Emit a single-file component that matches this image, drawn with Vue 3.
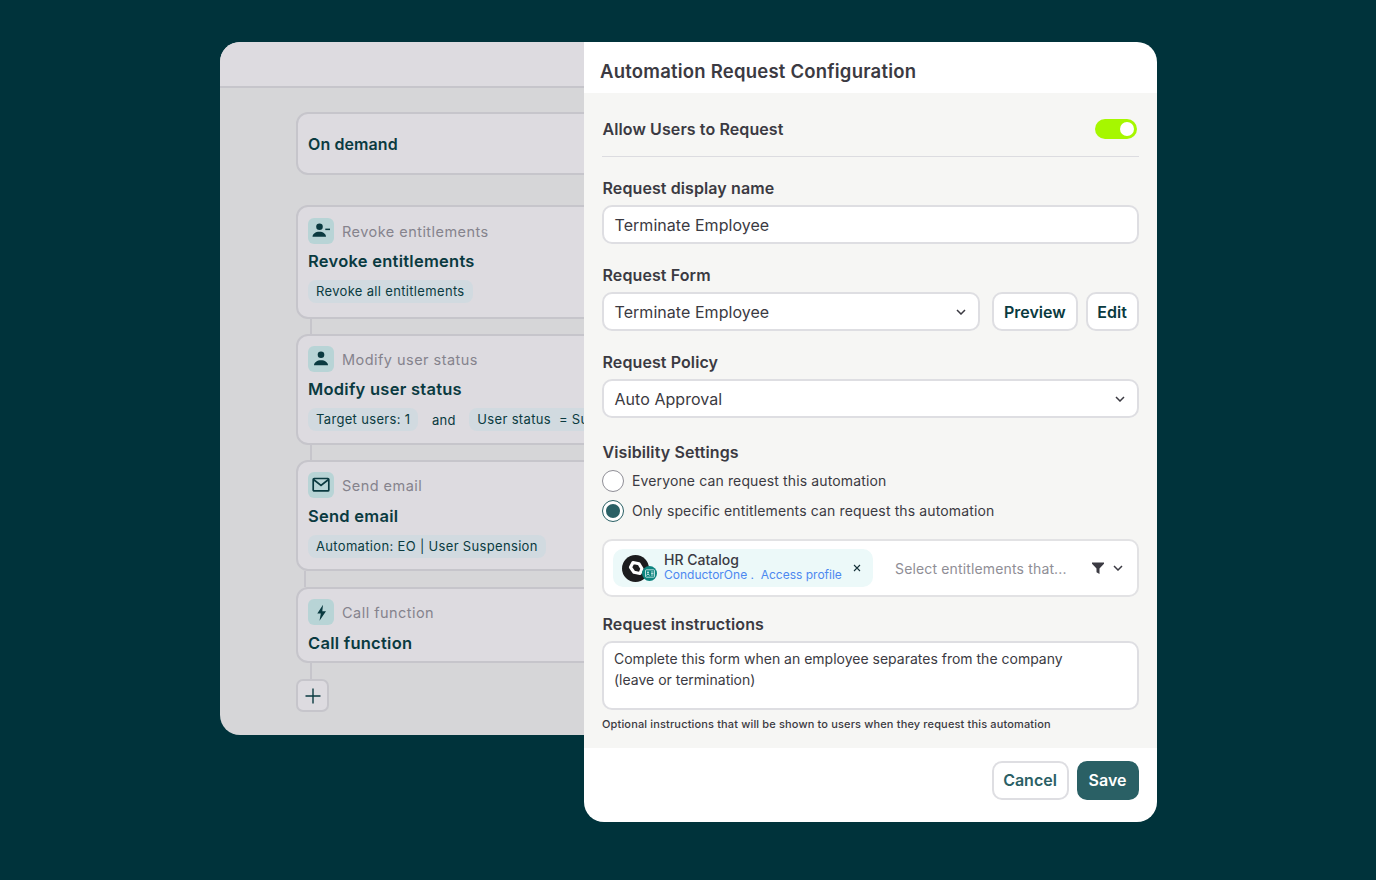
<template>
  <div class="stage">
    <section class="flow">
      <div class="flow-top"></div>
      <div class="flow-body">
        <div class="card trigger">On demand</div>

        <div
          v-for="step in steps"
          :key="step.label"
          class="step"
          :class="step.cls"
        >
          <div class="card">
            <div class="card-head">
              <span class="step-icon">
                <svg v-if="step.icon === 'revoke'" width="20" height="20" viewBox="0 0 20 20" fill="#0a3a40">
                  <circle cx="8.500" cy="5.800" r="3.300" />
                  <path d="M1.500 15.800c0-3 3-5.100 6.800-5.100 3.800 0 6.700 2.100 6.700 5.100z" />
                  <rect x="14.300" y="7.600" width="4.700" height="1.500" />
                </svg>
                <svg v-else-if="step.icon === 'user'" width="20" height="20" viewBox="0 0 20 20" fill="#0a3a40">
                  <circle cx="10" cy="5.800" r="3.300" />
                  <path d="M3 16.300c0-3 3.200-5.100 7-5.100s7 2.100 7 5.100z" />
                </svg>
                <svg v-else-if="step.icon === 'mail'" width="20" height="20" viewBox="0 0 20 20" fill="none" stroke="#0a3a40" stroke-width="1.700">
                  <rect x="2.200" y="3.500" width="15.600" height="12.400" rx="1" />
                  <path d="M2.500 4.500l7.500 6 7.500-6" />
                </svg>
                <svg v-else width="20" height="20" viewBox="0 0 20 20" fill="#0a3a40">
                  <path d="M12 2.800L6.300 11.500h3.500L8.500 18.700 15 9.200h-3.700z" />
                </svg>
              </span>
              <span class="step-label">{{ step.label }}</span>
            </div>
            <div class="step-title">{{ step.label }}</div>
            <div v-if="step.chips" class="chips">
              <template v-for="chip in step.chips" :key="chip.text">
                <span :class="chip.plain ? 'chip-plain' : 'chip'">{{ chip.text }}</span>
              </template>
            </div>
          </div>
        </div>

        <div class="add-wrap">
          <button class="add-btn">
            <svg width="18" height="18" viewBox="0 0 18 18" fill="none" stroke="#0a3a40" stroke-width="1.400">
              <path d="M9 1.500v15M1.500 9h15" />
            </svg>
          </button>
        </div>
      </div>
    </section>

    <section class="dialog">
      <header class="dialog-head">Automation Request Configuration</header>

      <div class="dialog-body">
        <div class="allow-row">
          <span class="field-label">Allow Users to Request</span>
          <span class="toggle"><span class="knob"></span></span>
        </div>

        <div class="field-label name-label">Request display name</div>
        <div class="input">Terminate Employee</div>

        <div class="field-label form-label">Request Form</div>
        <div class="form-row">
          <div class="input select">
            <span>Terminate Employee</span>
            <svg class="chev" width="10" height="6" viewBox="0 0 10 6" fill="none" stroke="#3b3a42" stroke-width="1.500">
              <path d="M1 1l4 4 4-4" />
            </svg>
          </div>
          <button class="btn preview">Preview</button>
          <button class="btn edit">Edit</button>
        </div>

        <div class="field-label policy-label">Request Policy</div>
        <div class="input select">
          <span>Auto Approval</span>
          <svg class="chev" width="10" height="6" viewBox="0 0 10 6" fill="none" stroke="#3b3a42" stroke-width="1.500">
            <path d="M1 1l4 4 4-4" />
          </svg>
        </div>

        <div class="field-label vis-label">Visibility Settings</div>
        <label class="radio-row">
          <span class="radio"></span>
          <span class="radio-text">Everyone can request this automation</span>
        </label>
        <label class="radio-row">
          <span class="radio on"><span class="dot"></span></span>
          <span class="radio-text">Only specific entitlements can request ths automation</span>
        </label>

        <div class="picker">
          <div class="tag">
            <span class="logo">
              <svg width="27" height="27" viewBox="0 0 27 27">
                <circle cx="13.500" cy="13.500" r="13.500" fill="#1c1c1e" />
                <path d="M11 7.500l6 1.200 3 5-2 4.800-6-1.200-3.500-5z" fill="none" stroke="#fff" stroke-width="3.200" stroke-linejoin="round" />
              </svg>
              <span class="logo-badge">
                <svg width="10" height="9" viewBox="0 0 10 9" fill="none" stroke="#dff3f1" stroke-width="0.800">
                  <rect x="0.500" y="0.800" width="9" height="7.400" rx="0.800" />
                  <circle cx="3" cy="3.500" r="0.900" fill="#dff3f1" stroke="none" />
                  <path d="M1.500 6.500c.2-1.600 2.800-1.600 3 0M6 3h2.500M6 4.500h2.500M6 6h2.500" />
                </svg>
              </span>
            </span>
            <span class="tag-text">
              <span class="tag-title">HR Catalog</span>
              <span class="tag-sub">ConductorOne .&nbsp; Access profile</span>
            </span>
            <svg class="tag-x" width="8" height="8" viewBox="0 0 8 8" fill="none" stroke="#16323a" stroke-width="1.100">
              <path d="M1 1l6 6M7 1L1 7" />
            </svg>
          </div>
          <span class="placeholder">Select entitlements that...</span>
          <svg class="funnel" width="12" height="12" viewBox="0 0 12 12" fill="#3b3a42">
            <path d="M0 .500h12v1.300L7.500 6.500V12l-3-1.800V6.500L0 1.800z" />
          </svg>
          <svg class="chev" width="10" height="6" viewBox="0 0 10 6" fill="none" stroke="#3b3a42" stroke-width="1.500">
            <path d="M1 1l4 4 4-4" />
          </svg>
        </div>

        <div class="field-label instr-label">Request instructions</div>
        <div class="textarea">Complete this form when an employee separates from the company<br />(leave or termination)</div>
        <div class="hint">Optional instructions that will be shown to users when they request this automation</div>
      </div>

      <footer class="dialog-foot">
        <button class="btn cancel">Cancel</button>
        <button class="btn save">Save</button>
      </footer>
    </section>
  </div>
</template>

<script setup>
const steps = [
  {
    label: 'Revoke entitlements',
    icon: 'revoke',
    cls: 'step-1',
    chips: [{ text: 'Revoke all entitlements' }]
  },
  {
    label: 'Modify user status',
    icon: 'user',
    cls: 'step-2',
    chips: [
      { text: 'Target users: 1' },
      { text: 'and', plain: true },
      { text: 'User status  = Suspended' }
    ]
  },
  {
    label: 'Send email',
    icon: 'mail',
    cls: 'step-3',
    chips: [{ text: 'Automation: EO | User Suspension' }]
  },
  {
    label: 'Call function',
    icon: 'bolt',
    cls: 'step-4'
  }
]
</script>

<style>
html,
body {
  margin: 0;
  background: #00333b;
}
</style>

<style scoped>
.stage {
  width: 1376px;
  height: 880px;
  box-sizing: border-box;
  padding: 42px 0 0 220px;
  display: flex;
  align-items: flex-start;
  background: #00333b;
  font-family: Inter, "Liberation Sans", sans-serif;
  overflow: hidden;
}

/* left panel, dimmed behind the dialog */
.flow {
  width: 364px;
  height: 693px;
  background: #d6d6d8;
  border-radius: 20px 0 0 20px;
  overflow: hidden;
  flex: none;
}

.flow-top {
  height: 44px;
  background: #dddbe0;
  border-bottom: 2px solid #c6c5cb;
}

.flow-body {
  padding: 24px 0 0 76px;
}

.card {
  width: 420px;
  box-sizing: border-box;
  background: #dddbe0;
  border: 2px solid #c6c5cb;
  border-radius: 12px;
  padding: 10px 0 0 10px;
  white-space: nowrap;
  overflow: hidden;
}

.trigger {
  height: 63px;
  display: flex;
  align-items: center;
  padding: 0 0 0 10px;
  margin-bottom: 30px;
  font-size: 16px;
  font-weight: 600;
  letter-spacing: 0.100px;
  color: #0a3a40;
}

.step::before {
  content: "";
  display: block;
  width: 2px;
  background: #c6c5cb;
  margin-left: 14px;
}

.step-1::before {
  height: 0;
}

.step-2::before {
  height: 15px;
}

.step-3::before {
  height: 15px;
}

.step-4::before {
  height: 16px;
  margin-left: 8px;
}

.step-1 .card {
  height: 114px;
  padding-top: 11px;
}

.step-2 .card,
.step-3 .card {
  height: 111px;
}

.step-4 .card {
  height: 76px;
}

.card-head {
  display: flex;
  align-items: center;
  gap: 8px;
  height: 26px;
}

.step-icon {
  width: 26px;
  height: 26px;
  border-radius: 6px;
  background: #b8d4d6;
  display: flex;
  align-items: center;
  justify-content: center;
}

.step-label {
  font-size: 14.500px;
  color: #85838d;
  letter-spacing: 0.460px;
}

.step-title {
  font-size: 16.500px;
  font-weight: 600;
  letter-spacing: 0.260px;
  color: #0a3a40;
  margin-top: 8px;
  line-height: 20px;
}

.step-1 .step-title,
.step-2 .step-title {
  margin-top: 7px;
}

.chips {
  display: flex;
  align-items: center;
  margin-top: 9px;
  white-space: pre;
}

.chip {
  height: 23px;
  line-height: 22px;
  padding: 0 8px;
  background: #d1dae0;
  border-radius: 8px;
  font-size: 13px;
  letter-spacing: 0.330px;
  color: #0a3a40;
}

.chip-plain {
  padding: 0 13.500px;
  font-size: 13px;
  letter-spacing: 0.330px;
  color: #0a3a40;
}

.add-wrap {
  display: flex;
  flex-direction: column;
}

.add-wrap::before {
  content: "";
  width: 2px;
  height: 16px;
  background: #c6c5cb;
  margin-left: 14px;
}

.add-btn {
  width: 33px;
  height: 33px;
  padding: 0;
  background: #dddbe0;
  border: 2px solid #c6c5cb;
  border-radius: 7px;
  display: flex;
  align-items: center;
  justify-content: center;
}

/* dialog */
.dialog {
  width: 572.500px;
  height: 779.500px;
  flex: none;
  background: #fff;
  border-radius: 0 20px 20px 20px;
  display: flex;
  flex-direction: column;
  overflow: hidden;
}

.dialog-head {
  height: 51px;
  flex: none;
  box-sizing: border-box;
  padding: 18px 0 0 16px;
  font-size: 18.500px;
  line-height: 22px;
  font-weight: 600;
  letter-spacing: 0.220px;
  color: #3b3a42;
}

.dialog-body {
  flex: 1;
  background: #f6f6f4;
  padding: 0 18px 0 18px;
  color: #3b3a42;
}

.field-label {
  padding-left: 0.500px;
  font-size: 16px;
  font-weight: 600;
  line-height: 20px;
  letter-spacing: 0.100px;
  color: #3b3a42;
}

.allow-row {
  height: 64px;
  box-sizing: border-box;
  border-bottom: 1px solid #dcdce0;
  display: flex;
  align-items: center;
  justify-content: space-between;
  padding-top: 9px;
}

.toggle {
  width: 42.500px;
  height: 20px;
  margin-right: 1.500px;
  border-radius: 10px;
  background: #a6f700;
  display: flex;
  align-items: center;
  justify-content: flex-end;
  padding-right: 3px;
  box-sizing: border-box;
}

.knob {
  width: 14px;
  height: 14px;
  border-radius: 50%;
  background: #fff;
}

.name-label,
.form-label,
.policy-label {
  margin-top: 21px;
}

.vis-label {
  margin-top: 24px;
}

.instr-label {
  margin-top: 17px;
}

.input {
  height: 39px;
  box-sizing: border-box;
  margin-top: 7px;
  padding: 0 10.500px;
  background: #fff;
  border: 2px solid #dedee2;
  border-radius: 10px;
  display: flex;
  align-items: center;
  font-size: 16px;
  letter-spacing: 0.050px;
  color: #3b3a42;
}

.select {
  justify-content: space-between;
  padding-right: 12px;
}

.form-row {
  display: flex;
  margin-top: 7px;
  align-items: flex-start;
}

.form-row .input {
  margin-top: 0;
  width: 378px;
  flex: none;
}

.btn {
  height: 39px;
  padding: 0;
  box-sizing: border-box;
  background: #fff;
  border: 2px solid #dedee2;
  border-radius: 10px;
  font-family: inherit;
  font-size: 16px;
  font-weight: 600;
  color: #0a3a40;
}

.preview {
  width: 86px;
  margin-left: 12px;
}

.edit {
  width: 53px;
  margin-left: 8px;
}

.radio-row {
  display: flex;
  align-items: center;
  gap: 8px;
  height: 22px;
  margin-top: 8px;
  font-size: 14px;
  letter-spacing: 0.130px;
  color: #3b3a42;
}

.radio-text {
  margin-bottom: 2px;
}

.radio {
  width: 22px;
  height: 22px;
  box-sizing: border-box;
  border: 1.500px solid #8f8e96;
  border-radius: 50%;
  background: #fff;
  flex: none;
}

.radio.on {
  border-color: #2a6065;
  display: flex;
  align-items: center;
  justify-content: center;
}

.dot {
  width: 14px;
  height: 14px;
  border-radius: 50%;
  background: #2a6065;
}

.picker {
  height: 58px;
  box-sizing: border-box;
  margin-top: 17px;
  padding: 0 14px 0 9px;
  background: #fff;
  border: 2px solid #e2e2e4;
  border-radius: 10px;
  display: flex;
  align-items: center;
}

.tag {
  width: 260px;
  height: 38px;
  flex: none;
  box-sizing: border-box;
  padding: 0 12px 0 9px;
  background: #ecf9f9;
  border-radius: 10px;
  display: flex;
  align-items: center;
}

.logo {
  position: relative;
  width: 27px;
  height: 27px;
  display: block;
  flex: none;
}

.logo svg {
  display: block;
}

.logo-badge {
  position: absolute;
  right: -8px;
  bottom: 1px;
  width: 15px;
  height: 15px;
  border-radius: 50%;
  background: #0e8580;
  display: flex;
  align-items: center;
  justify-content: center;
}

.tag-text {
  margin-left: 15px;
  margin-top: -3px;
  display: flex;
  flex-direction: column;
}

.tag-title {
  font-size: 14px;
  line-height: 15px;
  font-weight: 500;
  color: #3b3a42;
}

.tag-sub {
  font-size: 12px;
  line-height: 15px;
  color: #4d88f0;
}

.tag-x {
  margin-left: auto;
  margin-top: -1px;
}

.placeholder {
  margin-left: 22px;
  font-size: 14px;
  letter-spacing: 0.150px;
  color: #8f8e96;
}

.funnel {
  margin-left: auto;
}

.picker .chev {
  margin-left: 9px;
}

.textarea {
  height: 69px;
  box-sizing: border-box;
  margin-top: 7px;
  padding: 5px 10px;
  background: #fff;
  border: 2px solid #dedee2;
  border-radius: 10px;
  font-size: 14px;
  line-height: 21px;
  color: #3b3a42;
}

.hint {
  margin-top: 7px;
  font-size: 11px;
  font-weight: 500;
  line-height: 14px;
  letter-spacing: 0.150px;
  color: #3b3a42;
}

.dialog-foot {
  height: 74px;
  flex: none;
  box-sizing: border-box;
  padding: 13px 18px 0 0;
  display: flex;
  justify-content: flex-end;
  gap: 8px;
}

.cancel {
  width: 77px;
  color: #2a6065;
}

.save {
  width: 62px;
  background: #2a6065;
  border-color: #2a6065;
  color: #fff;
}
</style>
